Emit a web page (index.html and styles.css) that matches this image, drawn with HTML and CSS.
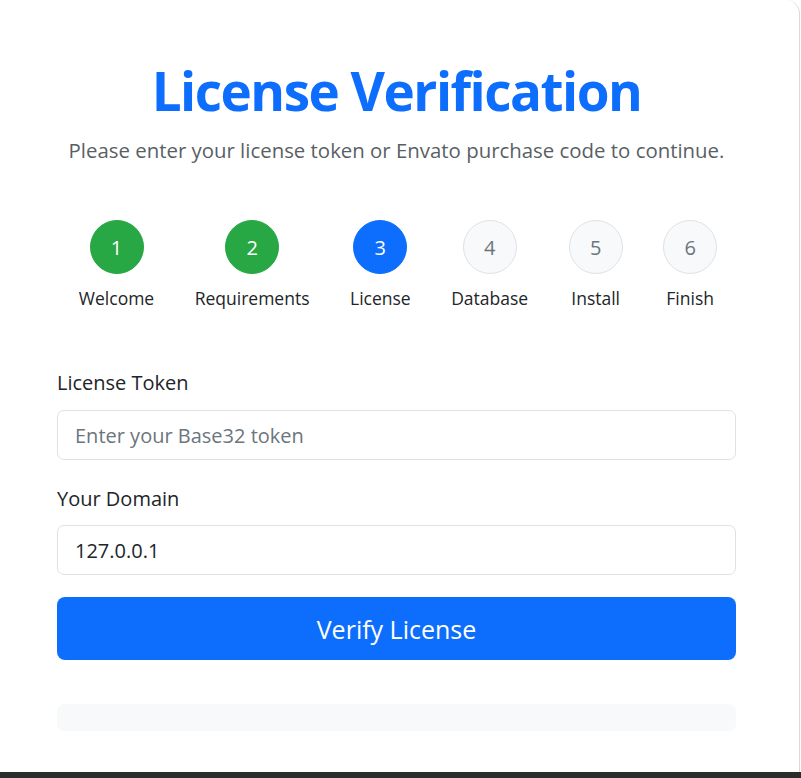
FILE: index.html
```html
<!DOCTYPE html>
<html lang="en">
<head>
<meta charset="utf-8">
<title>License Verification</title>
<link rel="stylesheet" href="styles.css">
</head>
<body>
<div class="frame">
  <div class="card">
    <h1 class="title">License Verification</h1>
    <p class="lead">Please enter your license token or Envato purchase code to continue.</p>
    <div class="steps">
      <div class="step"><span class="dot done">1</span><span class="label">Welcome</span></div>
      <div class="step"><span class="dot done">2</span><span class="label">Requirements</span></div>
      <div class="step"><span class="dot active">3</span><span class="label">License</span></div>
      <div class="step"><span class="dot">4</span><span class="label">Database</span></div>
      <div class="step"><span class="dot">5</span><span class="label">Install</span></div>
      <div class="step"><span class="dot">6</span><span class="label">Finish</span></div>
    </div>
    <form class="form">
      <label class="form-label" for="token">License Token</label>
      <input class="form-control" id="token" type="text" placeholder="Enter your Base32 token">
      <label class="form-label" for="domain">Your Domain</label>
      <input class="form-control" id="domain" type="text" value="127.0.0.1">
      <button class="btn" type="button">Verify License</button>
    </form>
    <div class="note"></div>
  </div>
</div>
<div class="taskbar"></div>
</body>
</html>
```

FILE: styles.css
```css
* { box-sizing: border-box; }
html, body { margin: 0; padding: 0; background: #ffffff; }
body {
  font-family: "Open Sans", "Noto Sans", sans-serif;
  color: #212529;
  width: 801px;
  height: 778px;
  overflow: hidden;
  display: flex;
  flex-direction: column;
}
.frame { flex: 1; display: flex; }
.card {
  width: 800px;
  height: 772px;
  background: #fff;
  border-right: 1px solid #d9d9d9;
  border-top-right-radius: 14px;
  padding: 56px 63px 0 57px;
  display: flex;
  flex-direction: column;
}
.title {
  margin: 0;
  text-align: center;
  color: #0d6efd;
  font-size: 53px;
  font-weight: 700;
  line-height: 70px;
  letter-spacing: -1.5px;
}
.lead {
  margin: 10px 0 0;
  text-align: center;
  color: #595f65;
  font-size: 20.4px;
  line-height: 28px;
}
.steps {
  display: flex;
  justify-content: center;
  gap: 40.5px;
  margin-top: 56px;
  padding-left: 3px;
}
.step {
  display: flex;
  flex-direction: column;
  align-items: center;
  gap: 12px;
}
.dot {
  width: 54px;
  height: 54px;
  border-radius: 50%;
  display: flex;
  align-items: center;
  justify-content: center;
  font-size: 20px;
  background: #f8f9fa;
  border: 1px solid #dee2e6;
  color: #6c757d;
}
.dot.done { background: #28a745; border-color: #28a745; color: #fff; }
.dot.active { background: #0d6efd; border-color: #0d6efd; color: #fff; }
.label { font-size: 17.5px; line-height: 24px; white-space: nowrap; }
.form { display: flex; flex-direction: column; margin-top: 60px; }
.form-label { font-size: 20px; line-height: 26px; margin-bottom: 14px; }
.form-label + .form-control + .form-label { margin-top: 1px; margin-bottom: 13px; }
.form-control {
  height: 50px;
  border: 1px solid #dee2e6;
  border-radius: 7px;
  padding: 0 17px;
  font-family: inherit;
  font-size: 20px;
  color: #212529;
  margin-bottom: 25px;
  outline: none;
}
.form-control::placeholder { color: #6c757d; }
.form-control#domain { margin-bottom: 22px; }
.btn {
  height: 63px;
  border: none;
  border-radius: 8px;
  background: #0d6efd;
  color: #fff;
  font-family: inherit;
  font-size: 25px;
}
.note {
  margin-top: 44px;
  height: 27px;
  border-radius: 7px;
  background: #f8f9fa;
}
.taskbar { height: 6px; background: #2b2b2b; }
```
